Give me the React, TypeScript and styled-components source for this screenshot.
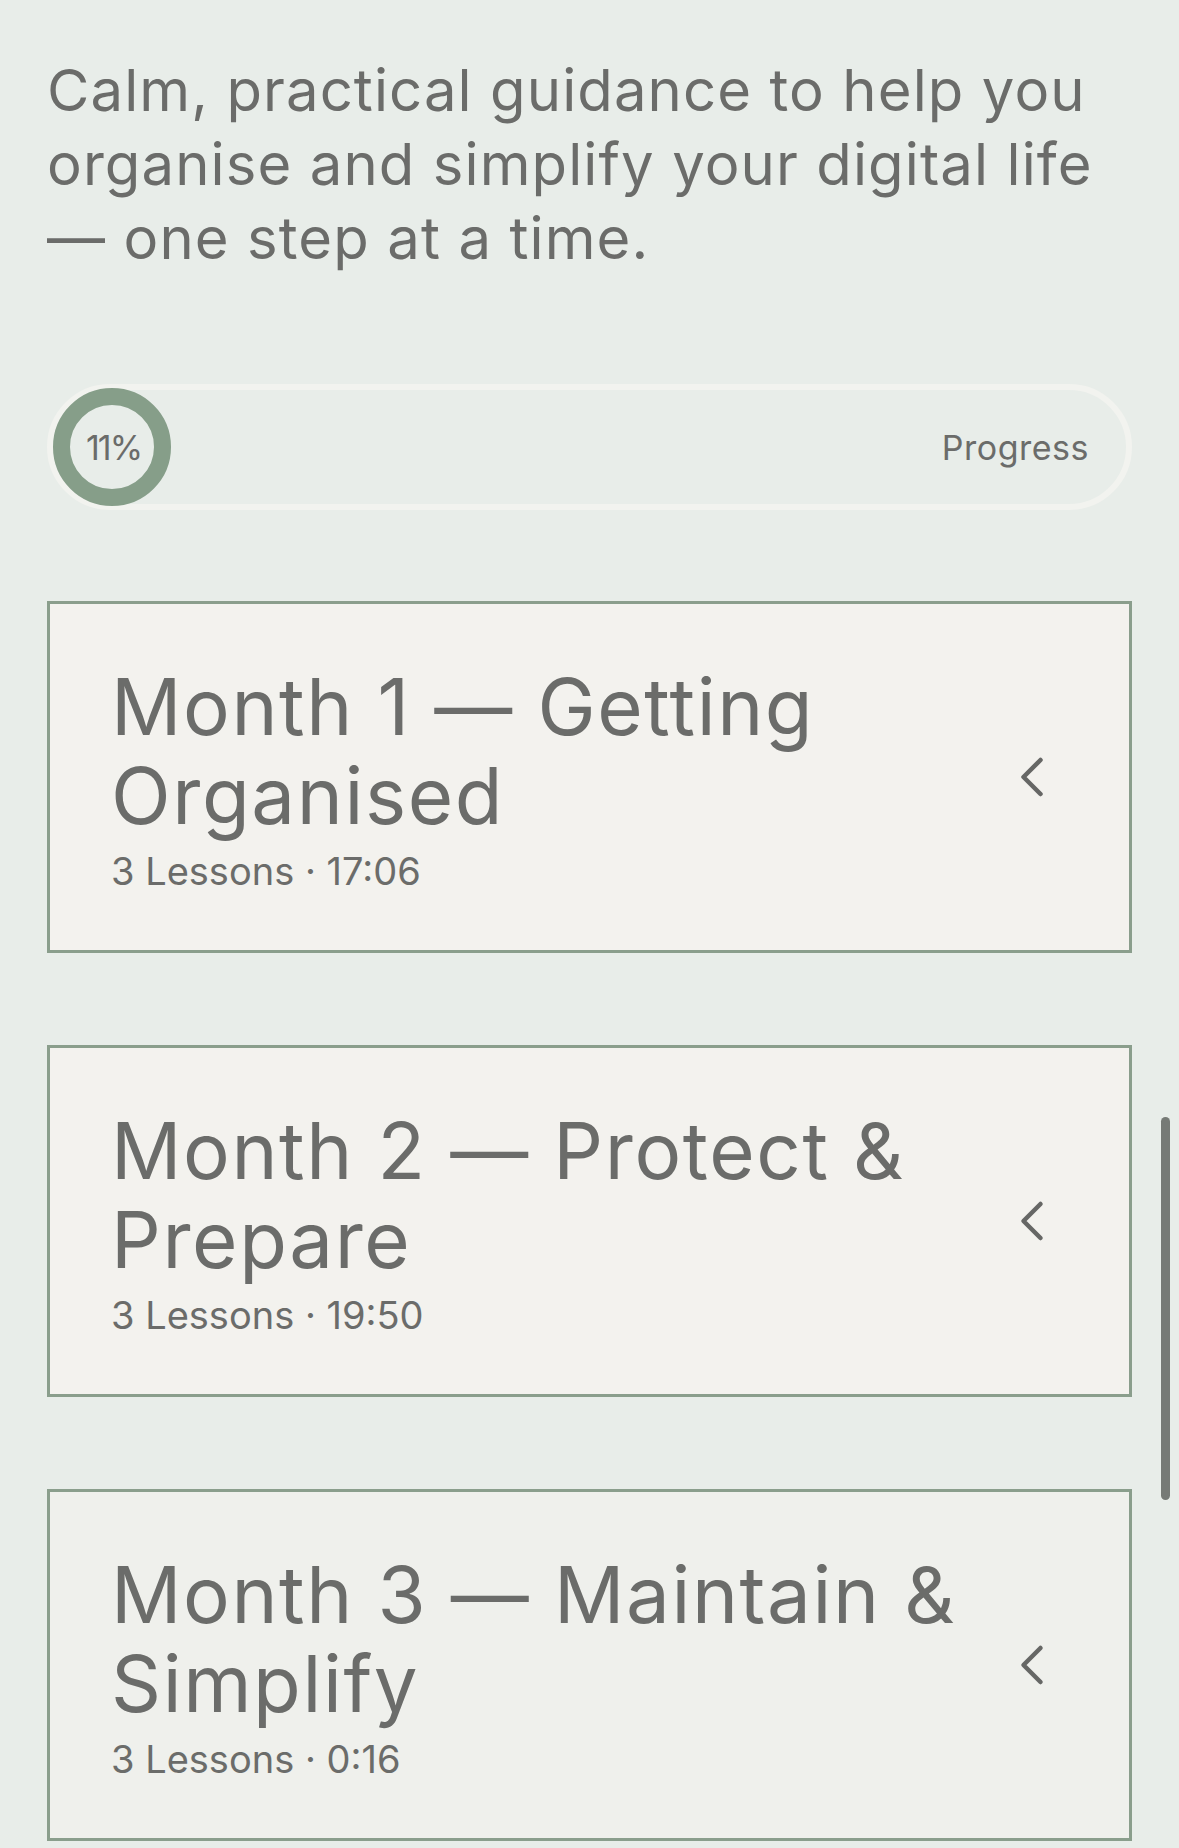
import styled, { createGlobalStyle } from 'styled-components';

const GlobalStyle = createGlobalStyle`
  html, body {
    margin: 0;
    padding: 0;
    background: #e8ede9;
  }
  body {
    font-family: Inter, "Noto Sans", "Liberation Sans", sans-serif;
    color: #6b6c6a;
  }
`;

const Page = styled.div`
  position: relative;
  height: 1848px;
  overflow: hidden;
  padding: 53px 47px 0;
  box-sizing: border-box;
  display: flex;
  flex-direction: column;
`;

const Intro = styled.p`
  margin: 0;
  font-size: 58px;
  line-height: 74px;
  font-weight: 400;
  letter-spacing: 1.1px;
  color: #6b6c6a;
`;

const ProgressPill = styled.div`
  margin-top: 109px;
  height: 126px;
  box-sizing: border-box;
  border: 6px solid #f2f3ef;
  border-radius: 63px;
  display: flex;
  align-items: center;
  justify-content: space-between;
  padding-right: 37px;
`;

const Ring = styled.div`
  width: 118px;
  height: 118px;
  box-sizing: border-box;
  border-radius: 50%;
  border: 17px solid #869e89;
  display: flex;
  align-items: center;
  justify-content: center;
  padding-left: 3px;
  font-size: 34px;
  letter-spacing: -2px;
  color: #6b6c6a;
`;

const ProgressLabel = styled.span`
  font-size: 34px;
  letter-spacing: 0.5px;
  color: #6b6c6a;
`;

const ModuleList = styled.div`
  margin-top: 91px;
  display: flex;
  flex-direction: column;
  gap: 92px;
`;

const Card = styled.div<{ $tint?: string }>`
  height: 352px;
  box-sizing: border-box;
  border: 3px solid #8a9e8c;
  background: ${({ $tint }) => $tint || '#f3f2ee'};
  display: flex;
  align-items: center;
  padding: 0 77px 0 61px;
`;

const CardText = styled.div`
  flex: 1;
  max-width: 900px;
`;

const CardTitle = styled.h2`
  margin: 0;
  font-size: 78px;
  line-height: 89px;
  font-weight: 400;
  letter-spacing: 1.6px;
  color: #6b6c6a;
`;

const CardMeta = styled.div`
  margin-top: 9px;
  font-size: 38px;
  line-height: 44px;
  color: #6b6c6a;
`;

const Chevron = styled.div`
  margin-left: auto;
  width: 40px;
  display: flex;
  justify-content: center;
  color: #666765;
`;

const ScrollThumb = styled.div`
  position: absolute;
  right: 9px;
  top: 1117px;
  width: 9px;
  height: 383px;
  border-radius: 5px;
  background: #767a76;
`;

const modules = [
  { title: 'Month 1 — Getting Organised', meta: '3 Lessons · 17:06' },
  { title: 'Month 2 — Protect & Prepare', meta: '3 Lessons · 19:50' },
  { title: 'Month 3 — Maintain & Simplify', meta: '3 Lessons · 0:16', tint: '#eff0ec' },
];

const ChevronIcon = () => (
  <svg width="26" height="42" viewBox="0 0 26 42" fill="none">
    <path d="M21.5 4 L4.5 21 L21.5 38" stroke="currentColor" strokeWidth="4.5" strokeLinecap="round" strokeLinejoin="round" />
  </svg>
);

const App = () => {
  return (
    <>
      <GlobalStyle />
      <Page>
        <Intro>
          Calm, practical guidance to help you
          <br />
          organise and simplify your digital life
          <br />— one step at a time.
        </Intro>

        <ProgressPill>
          <Ring>11%</Ring>
          <ProgressLabel>Progress</ProgressLabel>
        </ProgressPill>

        <ModuleList>
          {modules.map((m) => (
            <Card key={m.title} $tint={m.tint}>
              <CardText>
                <CardTitle>{m.title}</CardTitle>
                <CardMeta>{m.meta}</CardMeta>
              </CardText>
              <Chevron>
                <ChevronIcon />
              </Chevron>
            </Card>
          ))}
        </ModuleList>

        <ScrollThumb />
      </Page>
    </>
  );
};

export default App;
